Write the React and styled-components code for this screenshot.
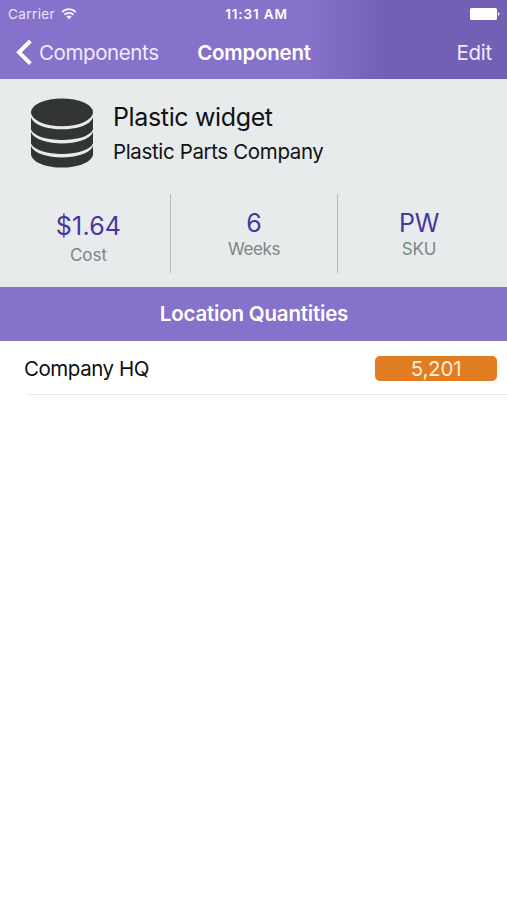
import React from "react";
import styled, { createGlobalStyle } from "styled-components";

const GlobalStyle = createGlobalStyle`
  * { box-sizing: border-box; }
  body {
    margin: 0;
    background: #fff;
    font-family: Inter, "Liberation Sans", sans-serif;
    -webkit-font-smoothing: antialiased;
  }
`;

const Screen = styled.main`
  display: flex;
  flex-direction: column;
  width: 507px;
  height: 900px;
  overflow: hidden;
  background: #fff;
`;

const Header = styled.header`
  height: 79px;
  color: #fff;
  background: linear-gradient(90deg, #8672ca 0, #8672ca 310px, #7e69c1 345px, #745fb6 382px, #745fb6 100%);
`;

const Bar = styled.div`
  display: grid;
  grid-template-columns: 1fr auto 1fr;
  align-items: center;
  height: ${(p) => p.$height}px;
  padding: ${(p) => p.$padding};
`;

const Side = styled.div`
  display: flex;
  align-items: center;
  gap: ${(p) => p.$gap || 0}px;
  justify-content: ${(p) => (p.$end ? "flex-end" : "flex-start")};
`;

const Label = styled.span`
  font-size: ${(p) => p.$size}px;
  font-weight: ${(p) => p.$weight || 400};
  line-height: ${(p) => p.$line || 26}px;
  letter-spacing: ${(p) => p.$spacing || 0}px;
  color: ${(p) => p.$color || "inherit"};
  white-space: nowrap;
`;

const Clock = styled(Label)`
  padding-left: 5px;
`;

const BarButton = styled.button`
  display: flex;
  align-items: center;
  gap: 7px;
  padding: 0;
  border: 0;
  background: none;
  color: #eee9ff;
  font: inherit;
`;

const Summary = styled.section`
  height: 208px;
  padding-top: 18px;
  background: #e7ebec;
`;

const Identity = styled.div`
  display: flex;
  gap: 19px;
  height: 97px;
  padding-left: 30px;
`;

const Names = styled.div`
  display: flex;
  flex-direction: column;
  color: #101214;
`;

const Stats = styled.div`
  display: grid;
  grid-template-columns: 170px 167px 170px;
  height: 79px;
`;

const Stat = styled.div`
  display: flex;
  flex-direction: column;
  align-items: center;
  height: 79px;
  padding-top: ${(p) => p.$top}px;
  padding-left: ${(p) => p.$inset || 0}px;
  padding-right: ${(p) => p.$outset || 0}px;
  border-left: ${(p) => (p.$divided ? "1px solid #b5babb" : "0")};
`;

const SectionTitle = styled.h2`
  display: flex;
  align-items: center;
  justify-content: center;
  height: 54px;
  margin: 0;
  padding-left: 1px;
  color: #fff;
  background: #8672ca;
`;

const LocationRow = styled.div`
  display: flex;
  align-items: center;
  justify-content: space-between;
  height: 54px;
  margin-left: 26px;
  padding: 2px 10px 0 0;
  border-bottom: 1px solid #e8e8ea;
  color: #101010;
`;

const LocationName = styled(Label)`
  margin-left: -2px;
`;

const Quantity = styled.div`
  display: flex;
  align-items: center;
  justify-content: center;
  width: 122px;
  height: 25px;
  border-radius: 5px;
  background: #e17c20;
  color: #fff0dc;
`;

function WifiIcon() {
  return (
    <svg width="16" height="12" viewBox="0 0 16 12" fill="none" stroke="#f7f4ff" strokeWidth="1.9">
      <path d="M1.2 4C5 .2 11 .2 14.8 4" />
      <path d="M3.5 6.7C6 4.3 10 4.3 12.5 6.7" />
      <path d="M5.4 8.6Q8 6.5 10.6 8.6L8 11.2Z" fill="#f7f4ff" stroke="none" />
    </svg>
  );
}

function BatteryIcon() {
  return (
    <svg width="30" height="12" viewBox="0 0 30 12" fill="#fff">
      <rect x="0" y="0" width="27" height="12" rx="1.5" />
      <path d="M28 4Q31 6 28 8Z" />
    </svg>
  );
}

function BackIcon() {
  return (
    <svg width="16" height="26" viewBox="0 0 16 26" fill="none" stroke="#fff" strokeWidth="4">
      <path d="M14.4 1L3 12.3L14.4 23.6" />
    </svg>
  );
}

function StackIcon() {
  return (
    <svg width="64" height="71" viewBox="0 0 64 71" fill="#333434">
      <ellipse cx="32" cy="15.3" rx="31" ry="13.9" />
      <path d="M1 20.5C7 36.3 57 36.3 63 20.5V32.5C57 46.5 7 46.5 1 32.5Z" />
      <path d="M1 35C7 50.2 57 50.2 63 35V46.5C57 60.4 7 60.4 1 46.5Z" />
      <path d="M1 49C7 64.3 57 64.3 63 49V58C58 74.8 6 74.8 1 58Z" />
    </svg>
  );
}

export default function App() {
  return (
    <>
      <GlobalStyle />
      <Screen>
        <Header>
          <Bar $height={27} $padding="0 7px 0 8px">
            <Side $gap={6}>
              <Label $size={13.5} $spacing={0.4} $color="#e9e3fb">Carrier</Label>
              <WifiIcon />
            </Side>
            <Clock $size={13.5} $weight={600} $spacing={0.85}>11:31 AM</Clock>
            <Side $end><BatteryIcon /></Side>
          </Bar>
          <Bar $height={52} $padding="0 15px 0 16px">
            <Side>
              <BarButton>
                <BackIcon />
                <Label $size={20.5} $spacing={-0.4}>Components</Label>
              </BarButton>
            </Side>
            <Label $size={20.5} $weight={600} $spacing={-0.25}>Component</Label>
            <Side $end>
              <BarButton><Label $size={20.5} $spacing={-0.25}>Edit</Label></BarButton>
            </Side>
          </Bar>
        </Header>

        <Summary>
          <Identity>
            <StackIcon />
            <Names>
              <Label $size={25} $line={40} $spacing={-0.36}>Plastic widget</Label>
              <Label $size={20.5} $line={30} $spacing={-0.36}>Plastic Parts Company</Label>
            </Names>
          </Identity>
          <Stats>
            <Stat $top={17} $inset={7}>
              <Label $size={25} $line={30} $spacing={0.2} $color="#49369d">$1.64</Label>
              <Label $size={17} $line={28} $color="#7d8586">Cost</Label>
            </Stat>
            <Stat $top={14} $divided>
              <Label $size={25} $line={30} $color="#49369d">6</Label>
              <Label $size={17} $line={22} $spacing={-0.4} $color="#7d8586">Weeks</Label>
            </Stat>
            <Stat $top={14} $outset={7} $divided>
              <Label $size={25} $line={30} $spacing={-0.3} $color="#49369d">PW</Label>
              <Label $size={17} $line={22} $spacing={-0.2} $color="#7d8586">SKU</Label>
            </Stat>
          </Stats>
        </Summary>

        <SectionTitle><Label $size={20.5} $weight={600} $spacing={-0.2}>Location Quantities</Label></SectionTitle>
        <LocationRow>
          <LocationName $size={20.5} $spacing={-0.45}>Company HQ</LocationName>
          <Quantity><Label $size={20.5} $spacing={-0.2}>5,201</Label></Quantity>
        </LocationRow>
      </Screen>
    </>
  );
}
